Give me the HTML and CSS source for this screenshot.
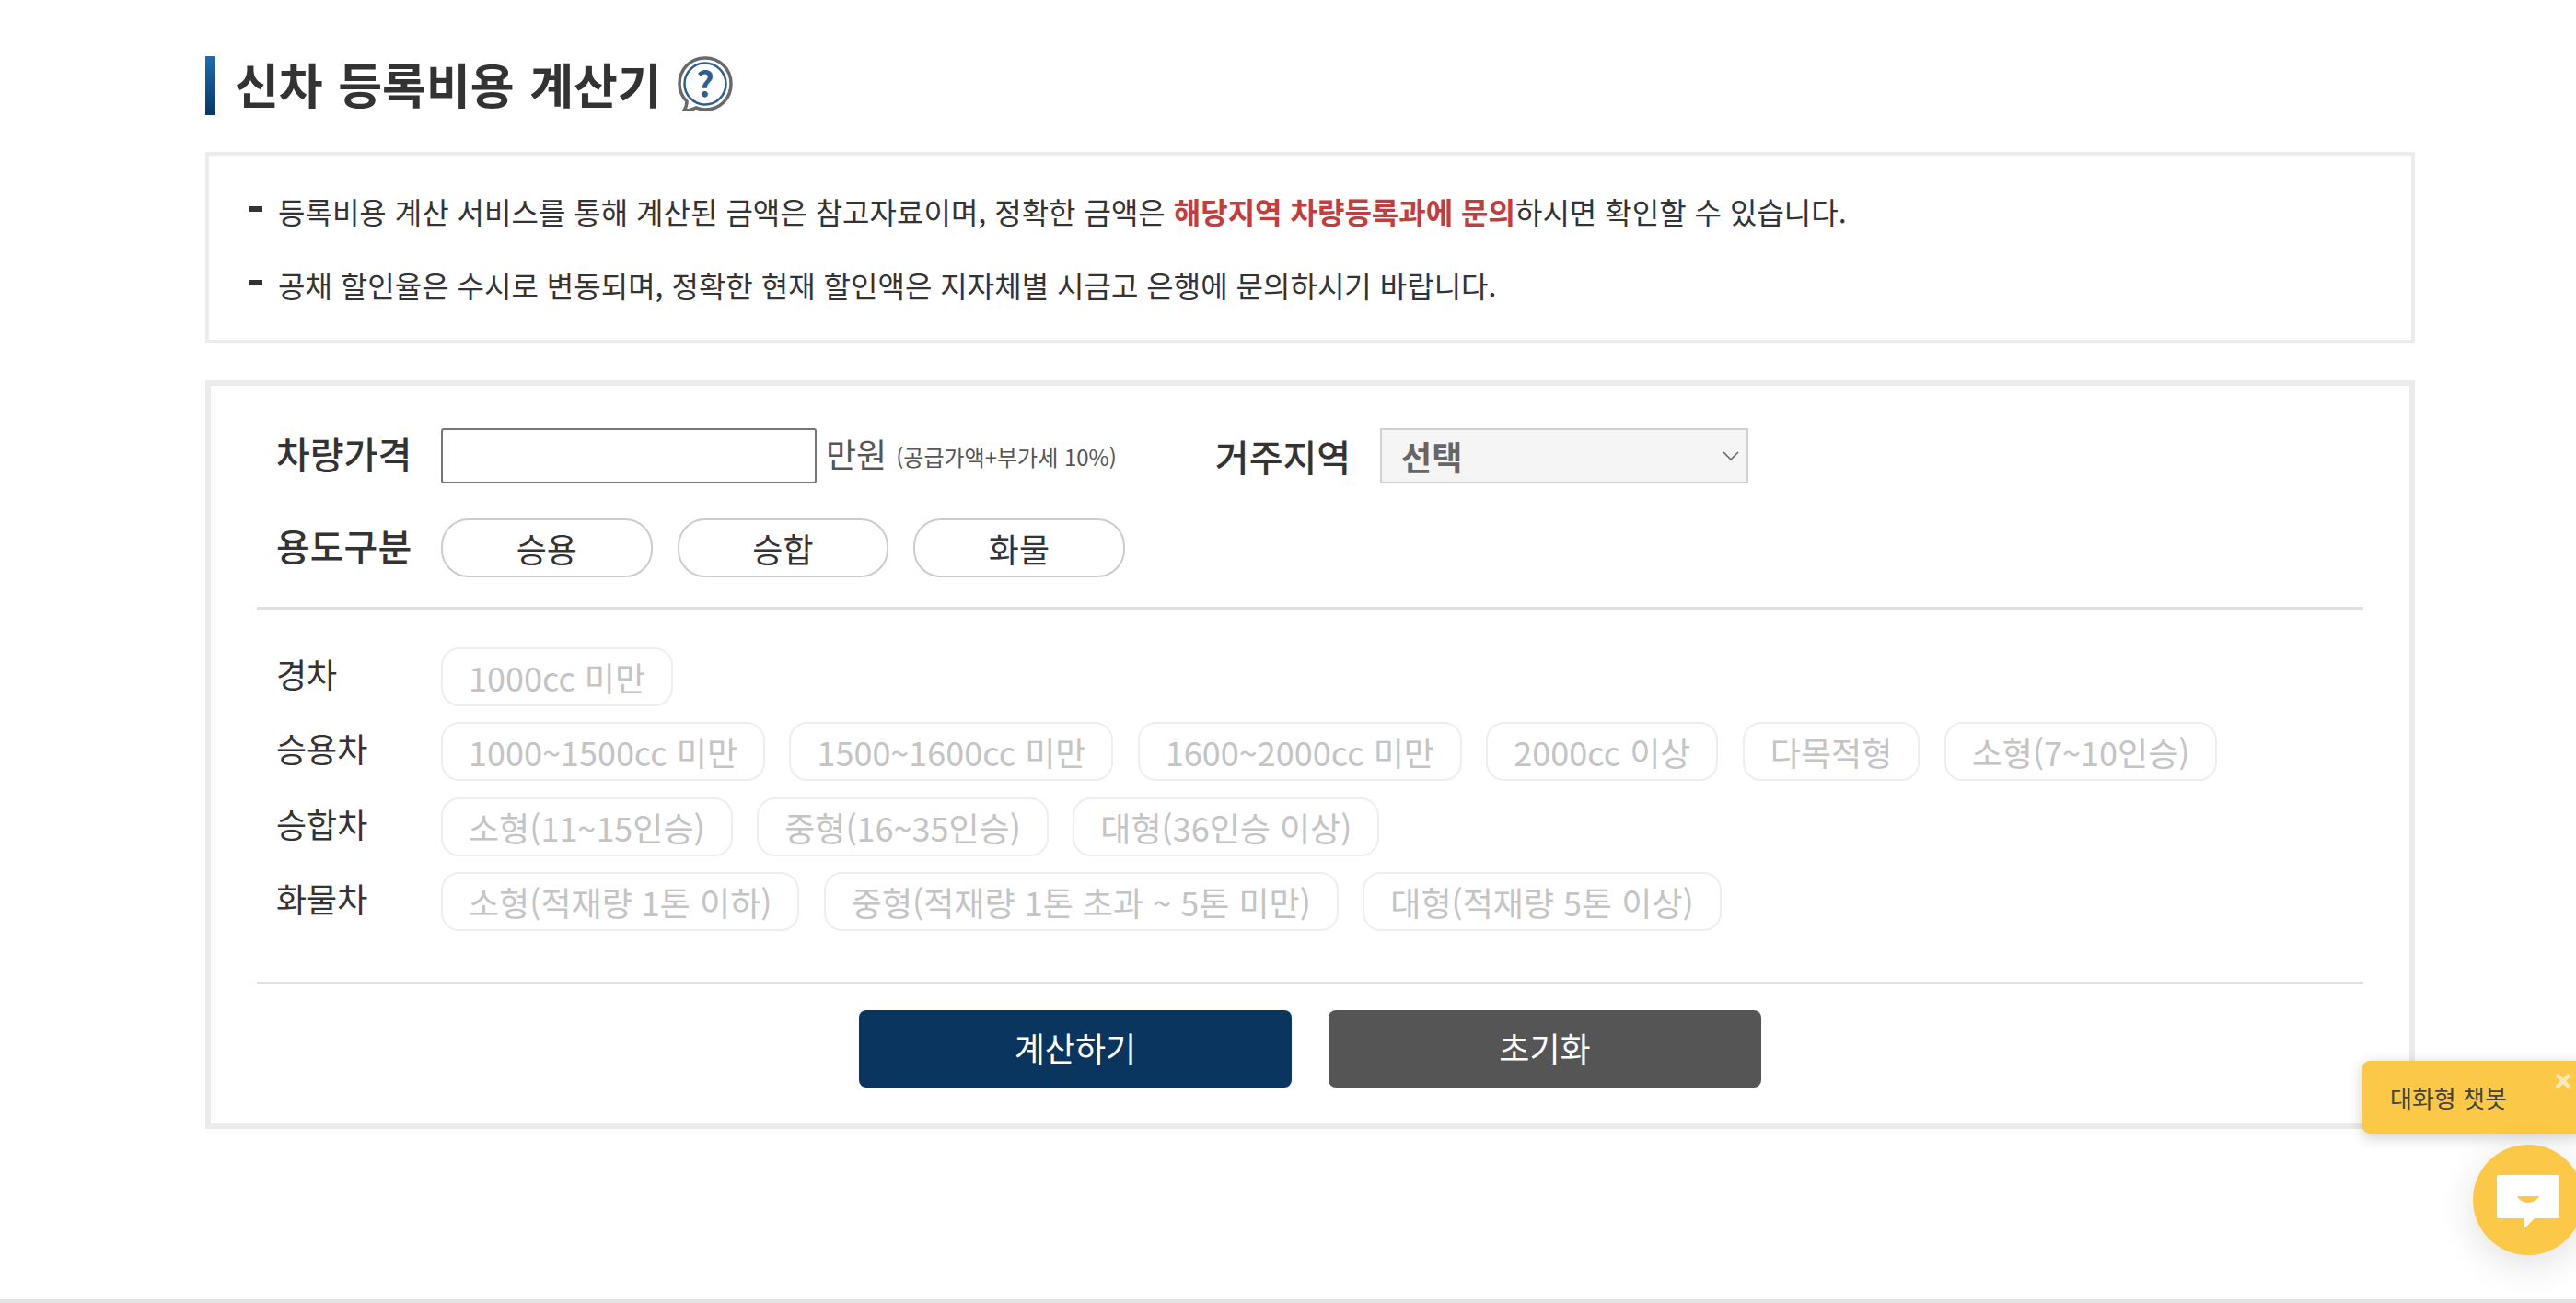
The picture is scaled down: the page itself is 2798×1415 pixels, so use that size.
FILE: index.html
```html
<!DOCTYPE html>
<html lang="ko">

<head>
    <meta charset="UTF-8">
    <title>신차 등록비용 계산기</title>
    <link rel="stylesheet" href="styles.css">
</head>

<body>

    <div class="container">

        <!-- Title -->
        <h2 class="title">
            <span class="title-bar"></span>
            <span class="title-text">신차 등록비용 계산기</span>
            <svg class="help-icon" viewBox="0 0 60 60">
                <path d="M30 2C14 2 2 14 2 30c0 8 3 14 8 19 0 4-1 7-3 10 5 0 9-1 13-3 3 1 6 2 10 2 16 0 28-12 28-28S46 2 30 2z" fill="#fff" stroke="#66696d" stroke-width="3.5"/>
                <circle cx="30" cy="30" r="22.5" fill="#fff" stroke="#2f5f8f" stroke-width="2.5"/>
                <text x="30" y="44" class="help-mark">?</text>
            </svg>
        </h2>

        <!-- Notice -->
        <div class="notice">
            <p class="notice-line"><span class="dash"></span>등록비용 계산 서비스를 통해 계산된 금액은 참고자료이며, 정확한 금액은 <strong>해당지역 차량등록과에 문의</strong>하시면 확인할 수 있습니다.</p>
            <p class="notice-line"><span class="dash"></span>공채 할인율은 수시로 변동되며, 정확한 현재 할인액은 지자체별 시금고 은행에 문의하시기 바랍니다.</p>
        </div>

        <!-- Calculator -->
        <div class="calc">
            <div class="row">
                <span class="label">차량가격</span>
                <input type="text" class="price-input">
                <span class="unit">만원</span>
                <span class="unit-note">(공급가액+부가세 10%)</span>
                <span class="label region-label">거주지역</span>
                <div class="region-wrap">
                    <select class="region">
                        <option>선택</option>
                    </select>
                    <svg class="region-arrow" viewBox="0 0 18 10">
                        <path d="M1 1l8 8 8-8" fill="none" stroke="#666" stroke-width="1.6"/>
                    </svg>
                </div>
            </div>

            <div class="row use-row">
                <span class="label">용도구분</span>
                <div class="pills">
                    <button class="pill">승용</button>
                    <button class="pill">승합</button>
                    <button class="pill">화물</button>
                </div>
            </div>

            <div class="types">
                <div class="type-row">
                    <span class="type-label">경차</span>
                    <div class="chips">
                        <button class="chip">1000cc 미만</button>
                    </div>
                </div>
                <div class="type-row">
                    <span class="type-label">승용차</span>
                    <div class="chips">
                        <button class="chip">1000~1500cc 미만</button>
                        <button class="chip">1500~1600cc 미만</button>
                        <button class="chip">1600~2000cc 미만</button>
                        <button class="chip">2000cc 이상</button>
                        <button class="chip">다목적형</button>
                        <button class="chip">소형(7~10인승)</button>
                    </div>
                </div>
                <div class="type-row">
                    <span class="type-label">승합차</span>
                    <div class="chips">
                        <button class="chip">소형(11~15인승)</button>
                        <button class="chip">중형(16~35인승)</button>
                        <button class="chip">대형(36인승 이상)</button>
                    </div>
                </div>
                <div class="type-row">
                    <span class="type-label">화물차</span>
                    <div class="chips">
                        <button class="chip">소형(적재량 1톤 이하)</button>
                        <button class="chip">중형(적재량 1톤 초과 ~ 5톤 미만)</button>
                        <button class="chip">대형(적재량 5톤 이상)</button>
                    </div>
                </div>
            </div>

            <div class="actions">
                <button class="btn btn-calc">계산하기</button>
                <button class="btn btn-reset">초기화</button>
            </div>
        </div>
    </div>

    <div class="footer-line"></div>

    <!-- Chatbot -->
    <div class="chat-tip">
        대화형 챗봇
        <svg class="chat-close" viewBox="0 0 18 18">
            <path d="M2 2l14 14M16 2L2 16" stroke="#fff" stroke-opacity="0.6" stroke-width="4.5"/>
        </svg>
    </div>
    <div class="chat-btn">
        <svg class="chat-icon" viewBox="0 0 68 57">
            <path d="M2 0h64a2 2 0 0 1 2 2v43a2 2 0 0 1-2 2H41L31 57a1 1 0 0 1-2-1v-9H2a2 2 0 0 1-2-2V2a2 2 0 0 1 2-2z" fill="#fff"/>
            <path d="M22 23h24c-2 4-7 7-12 7s-10-3-12-7z" fill="#fbc947"/>
        </svg>
    </div>

</body>
</html>
```

FILE: styles.css
```css
* {
    box-sizing: border-box;
}

body {
    margin: 0;
    height: 1415px;
    overflow: hidden;
    position: relative;
    background: #fff;
    color: #333;
    font-family: "Noto Sans CJK KR", "Noto Sans", sans-serif;
}

button, input, select {
    font-family: inherit;
}

.container {
    width: 2400px;
    margin-left: 223px;
    padding-top: 61px;
}

/* Title */
.title {
    display: flex;
    align-items: center;
    height: 64px;
    margin: 0;
    font-size: 52px;
    font-weight: 700;
    color: #333;
}

.title-bar {
    width: 10px;
    height: 64px;
    margin-right: 22px;
    background: linear-gradient(#1f6cb0, #043767);
}

.title-text {
    margin-bottom: 6px;
    word-spacing: 2px;
}

.help-icon {
    width: 60px;
    height: 60px;
    margin: 0 0 4px 17px;
}

.help-mark {
    font-size: 38px;
    font-weight: 700;
    fill: #2f5f8f;
    text-anchor: middle;
}

/* Notice */
.notice {
    height: 208px;
    margin-top: 40px;
    padding: 20px 0 20px 44px;
    border: 4px solid #ececec;
}

.notice-line {
    display: flex;
    align-items: center;
    height: 80px;
    margin: 0;
    font-size: 32px;
    white-space: pre;
}

.dash {
    width: 14px;
    height: 6px;
    margin: -4px 17px 0 0;
    background: #333;
}

.notice strong {
    color: #c43c3c;
    font-weight: 700;
}

/* Calculator */
.calc {
    height: 813px;
    margin-top: 40px;
    padding: 46px 50px 0;
    border: 6px solid #ebebeb;
}

.row {
    display: flex;
    align-items: center;
    height: 60px;
    padding-left: 21px;
}

.label {
    width: 179px;
    margin-top: -7px;
    font-size: 40px;
    font-weight: 500;
    color: #333;
}

.price-input {
    width: 408px;
    height: 60px;
    border: 2px solid #767676;
    border-radius: 3px;
}

.unit {
    margin: -6px 0 0 10px;
    font-size: 36px;
    color: #555;
}

.unit-note {
    margin-left: 10px;
    font-size: 24px;
    color: #555;
}

.region-label {
    width: auto;
    margin: 0 0 0 107px;
}

.region-wrap {
    position: relative;
    margin-left: 32px;
}

.region {
    display: block;
    appearance: none;
    width: 400px;
    height: 60px;
    padding-left: 21px;
    border: 2px solid #d0d0d0;
    border-radius: 0;
    background: #f5f5f5;
    color: #666;
    font-size: 36px;
    font-weight: 700;
}

.region-arrow {
    position: absolute;
    right: 10px;
    top: 25px;
    width: 18px;
    height: 10px;
}

.use-row {
    height: 64px;
    margin-top: 38px;
}

.pills {
    display: flex;
    gap: 27px;
}

.pill {
    width: 229.6px;
    height: 64px;
    padding: 0;
    border: 2px solid #ccc;
    border-radius: 30px;
    background: #fff;
    color: #333;
    font-size: 36px;
}

.types {
    display: flex;
    flex-direction: column;
    gap: 17.33px;
    margin-top: 32px;
    padding: 41px 0 55px 21px;
    border-top: 3px solid #e0e0e0;
    border-bottom: 3px solid #e0e0e0;
}

.type-row {
    display: flex;
}

.type-label {
    width: 179px;
    font-size: 36px;
    line-height: 56px;
    color: #333;
}

.chips {
    display: flex;
    gap: 26.4px;
}

.chip {
    height: 64px;
    padding: 0 28px;
    border: 2px solid #eee;
    border-radius: 20px;
    background: #fff;
    color: #c4c4c4;
    font-size: 36px;
    white-space: nowrap;
}

.actions {
    display: flex;
    justify-content: center;
    gap: 40px;
    margin-top: 28px;
}

.btn {
    width: 470px;
    height: 84px;
    padding: 0 0 3px;
    border: 0;
    border-radius: 8px;
    color: #fff;
    font-size: 36px;
}

.btn-calc {
    background: #09355f;
}

.btn-reset {
    background: #555;
}

.footer-line {
    position: absolute;
    left: 0;
    right: 0;
    bottom: 0;
    height: 4px;
    background: #e4e4e4;
}

/* Chatbot */
.chat-tip {
    position: absolute;
    left: 2566px;
    top: 1152px;
    width: 240px;
    height: 79px;
    padding-left: 30px;
    border-radius: 8px 0 0 8px;
    background: #fbc947;
    box-shadow: 0 4px 16px rgba(0, 0, 0, 0.2);
    color: #444;
    font-size: 26px;
    line-height: 80px;
}

.chat-close {
    position: absolute;
    left: 209px;
    top: 13px;
    width: 18px;
    height: 18px;
}

.chat-btn {
    position: absolute;
    left: 2686px;
    top: 1243px;
    width: 120px;
    height: 120px;
    border-radius: 50%;
    background: #fbc947;
    box-shadow: 0 10px 40px rgba(0, 0, 0, 0.12);
}

.chat-icon {
    position: absolute;
    left: 26px;
    top: 33px;
    width: 68px;
    height: 57px;
}
```
